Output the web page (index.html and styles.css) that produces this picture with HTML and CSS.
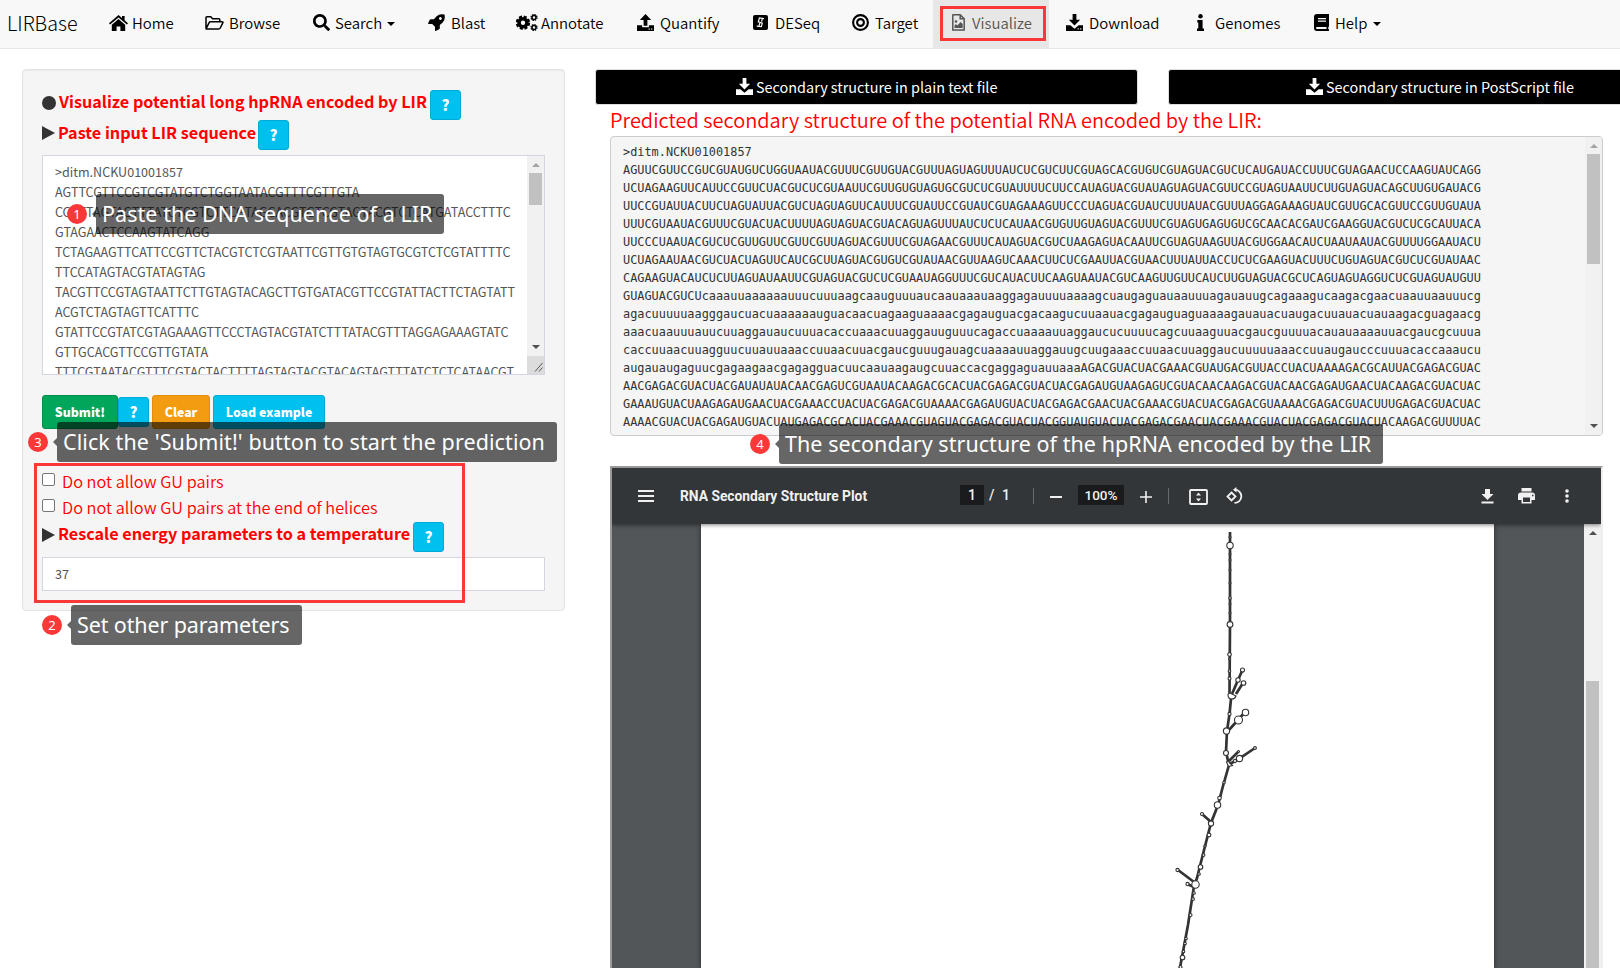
FILE: index.html
```html
<!DOCTYPE html>
<html lang="en">
<head>
<meta charset="utf-8">
<title>LIRBase</title>
<link rel="stylesheet" href="styles.css">
</head>
<body>
<svg class="defs" width="0" height="0">
  <symbol id="download" viewBox="0 0 18 18"><path d="M7 0h4v6h4l-6 6.3L3 6h4zM0 12h4.6L9 15.6 13.4 12H18v6H0z"/><path class="dot" d="M12.3 15.2h1.2v1.2h-1.2zM15 15.2h1.2v1.2H15z"/></symbol>
</svg>
<nav class="navbar">
  <a class="brand">LIRBase</a>
  <a class="item home"><svg width="19" height="16" viewBox="0 0 19 16"><path d="M9.5 0 13 3V1h2.6v4.2L19 8.2l-1.1 1.3-8.4-7.1-8.4 7.1L0 8.2z"/><path d="m9.5 4.1 6.7 5.7V16h-4.8v-4.6H7.6V16H2.8V9.8z"/></svg><span>Home</span></a>
  <a class="item browse"><svg width="19" height="14" viewBox="0 0 19 14"><path class="line" d="M1 12V1.8Q1 .8 2 .8h3.8l1.8 2h6.2q1 0 1 1v2M1 12.8l3-6q.5-1 1.5-1h11.4q1.5 0 .9 1.1l-2.4 4.8q-.6 1.3-2 1.3H1.6Q.8 13 1 12z"/></svg><span>Browse</span></a>
  <a class="item search"><svg width="17" height="17" viewBox="0 0 512 512"><path d="M505 442.7L405.3 343c-4.5-4.5-10.6-7-17-7H372c27.6-35.3 44-79.7 44-128C416 93.1 322.9 0 208 0S0 93.1 0 208s93.1 208 208 208c48.3 0 92.7-16.4 128-44v16.3c0 6.4 2.5 12.5 7 17l99.7 99.7c9.4 9.4 24.6 9.4 33.9 0l28.3-28.3c9.4-9.4 9.4-24.6.1-34zM208 336c-70.7 0-128-57.2-128-128s57.2-128 128-128 128 57.2 128 128-57.2 128-128 128z"/></svg><span>Search</span><i class="caret"></i></a>
  <a class="item blast"><svg width="17" height="17" viewBox="0 0 17 17"><path fill-rule="evenodd" d="M16.5.5q1.2 5.2-2 8.2l-2.7 2.4v3.2q0 .6-.6.9L7.7 17q-.7 0-.7-.8v-3.4L4.2 10H.8q-.8 0-.8-.7l1.8-3.5q.3-.6.9-.6h3.2l2.5-2.7Q11.300-.7 16.500.5zM12.400 3.100a1.400 1.400 0 1 0 .01 0z"/></svg><span>Blast</span></a>
  <a class="item annotate"><svg width="22" height="17" viewBox="0 0 22 17"><circle class="gear" cx="7" cy="8.700" r="4"/><circle class="teeth" cx="7" cy="8.700" r="6"/><circle class="mini" cx="18" cy="3.500" r="2"/><circle class="miniteeth" cx="18" cy="3.500" r="3"/><circle class="mini" cx="18" cy="13.500" r="2"/><circle class="miniteeth" cx="18" cy="13.500" r="3"/></svg><span>Annotate</span></a>
  <a class="item quantify"><svg width="17" height="17" viewBox="0 0 18 18"><path d="M7 12.500h4V6.300h4L9 0 3 6.300h4zM0 12h5.400v2h7.200v-2H18v6H0z"/><path class="dot" d="M12.300 15.400h1.200v1.200h-1.200zM15 15.400h1.200v1.200H15z"/></svg><span>Quantify</span></a>
  <a class="item deseq"><svg width="15" height="15" viewBox="0 0 15 15"><rect width="15" height="15" rx="2"/><path class="cut" d="M11 3.700 6.400 3 5.300 6.900l4 1.200-1 3.600-4.600-.6M9.300 4l-.8 2.700M6.800 8.200 6 11"/></svg><span>DESeq</span></a>
  <a class="item target"><svg width="17" height="17" viewBox="0 0 17 17"><circle class="ring" cx="8.500" cy="8.500" r="7.400"/><circle class="ring" cx="8.500" cy="8.500" r="3.400"/></svg><span>Target</span></a>
  <a class="item visualize active"><svg width="13" height="17" viewBox="0 0 13 17"><path class="line" d="M.8 1q0-.2.400-.2h7l4 4v11.200H.8zM8.200.8v4h4"/><circle cx="4" cy="7.500" r="1.300"/><path d="M2.500 14v-2.500L4 10l1.300 1.500L8.700 8l2 2v4z"/></svg><span>Visualize</span></a>
  <a class="item dl"><svg width="17" height="17"><use href="#download"/></svg><span>Download</span></a>
  <a class="item genomes"><svg width="7" height="17" viewBox="0 0 7 17"><circle cx="3.500" cy="2.200" r="2.200"/><path d="M.3 6h5.300v8.500H7V17H0v-2.500h1.300v-6h-1z"/></svg><span>Genomes</span></a>
  <a class="item help"><svg width="15" height="17" viewBox="0 0 15 17"><path fill-rule="evenodd" d="M3 0h12v12.500l-.7.600v1.800l.7.600V17H3q-3 0-3-3V3q0-3 3-3zm1 4v1.200h8V4zm0 2.600v1.200h8V6.600zM3 12.900q-1 0-1 1t1 1h9.500v-2z"/></svg><span>Help</span><i class="caret"></i></a>
</nav>

<main class="columns">
  <form class="well">
    <div class="heading first"><i class="disc"></i><b>Visualize potential long hpRNA encoded by LIR</b><i class="q">?</i></div>
    <div class="heading second"><i class="play"></i><b>Paste input LIR sequence</b><i class="q">?</i></div>
    <div class="textarea">
      <div class="dna">&gt;ditm.NCKU01001857<br>AGTTCGTTCCGTCGTATGTCTGGTAATACGTTTCGTTGTA<br>CGTTTAGTAGTTTATCTCGTCTTCGTAGCACGTGTCGTAGTACGTCTCATGATACCTTTC<br>GTAGAACTCCAAGTATCAGG<br>TCTAGAAGTTCATTCCGTTCTACGTCTCGTAATTCGTTGTGTAGTGCGTCTCGTATTTTC<br>TTCCATAGTACGTATAGTAG<br>TACGTTCCGTAGTAATTCTTGTAGTACAGCTTGTGATACGTTCCGTATTACTTCTAGTATT<br>ACGTCTAGTAGTTCATTTC<br>GTATTCCGTATCGTAGAAAGTTCCCTAGTACGTATCTTTATACGTTTAGGAGAAAGTATC<br>GTTGCACGTTCCGTTGTATA<br>TTTCGTAATACGTTTCGTACTACTTTTAGTAGTACGTACAGTAGTTTATCTCTCATAACGT</div>
      <div class="scroll"><i class="up"></i><i class="thumb"></i><i class="down"></i><svg class="grip" width="18" height="18" viewBox="0 0 18 18"><path d="M8 15.500 15.500 7M12 15.500l3.500-4"/></svg></div>
    </div>
    <div class="buttons"><span class="btn green">Submit!</span><i class="q">?</i><span class="btn orange">Clear</span><span class="btn cyan">Load example</span></div>
    <label class="check"><i class="box"></i><span class="gu1">Do not allow GU pairs</span></label>
    <label class="check"><i class="box"></i><span class="gu2">Do not allow GU pairs at the end of helices</span></label>
    <div class="heading third"><i class="play"></i><b>Rescale energy parameters to a temperature</b><i class="q">?</i></div>
    <div class="input">37</div>
  </form>

  <section class="results">
    <div class="files">
      <a class="file plain"><svg width="17" height="17"><use href="#download"/></svg><span>Secondary structure in plain text file</span></a>
      <a class="file post"><svg width="17" height="17"><use href="#download"/></svg><span>Secondary structure in PostScript file</span></a>
    </div>
    <h2>Predicted secondary structure of the potential RNA encoded by the LIR:</h2>
    <div class="output">
<pre>&gt;ditm.NCKU01001857
AGUUCGUUCCGUCGUAUGUCUGGUAAUACGUUUCGUUGUACGUUUAGUAGUUUAUCUCGUCUUCGUAGCACGUGUCGUAGUACGUCUCAUGAUACCUUUCGUAGAACUCCAAGUAUCAGG
UCUAGAAGUUCAUUCCGUUCUACGUCUCGUAAUUCGUUGUGUAGUGCGUCUCGUAUUUUCUUCCAUAGUACGUAUAGUAGUACGUUCCGUAGUAAUUCUUGUAGUACAGCUUGUGAUACG
UUCCGUAUUACUUCUAGUAUUACGUCUAGUAGUUCAUUUCGUAUUCCGUAUCGUAGAAAGUUCCCUAGUACGUAUCUUUAUACGUUUAGGAGAAAGUAUCGUUGCACGUUCCGUUGUAUA
UUUCGUAAUACGUUUCGUACUACUUUUAGUAGUACGUACAGUAGUUUAUCUCUCAUAACGUGUUGUAGUACGUUUCGUAGUGAGUGUCGCAACACGAUCGAAGGUACGUCUCGCAUUACA
UUCCCUAAUACGUCUCGUUGUUCGUUCGUUAGUACGUUUCGUAGAACGUUUCAUAGUACGUCUAAGAGUACAAUUCGUAGUAAGUUACGUGGAACAUCUAAUAAUACGUUUUGGAAUACU
UCUAGAAUAACGUCUACUAGUUCAUCGCUUAGUACGUGUCGUAUAACGUUAAGUCAAACUUCUCGAAUUACGUAACUUUAUUACCUCUCGAAGUACUUUCUGUAGUACGUCUCGUAUAAC
CAGAAGUACAUCUCUUAGUAUAAUUCGUAGUACGUCUCGUAAUAGGUUUCGUCAUACUUCAAGUAAUACGUCAAGUUGUUCAUCUUGUAGUACGCUCAGUAGUAGGUCUCGUAGUAUGUU
GUAGUACGUCUcaaauuaaaaaauuucuuuaagcaauguuuaucaauaaauaaggagauuuuaaaagcuaugaguauaauuuagauauugcagaaagucaagacgaacuaauuaauuucg
agacuuuuuaagggaucuacuaaaaaauguacaacuagaaguaaaacgagauguacgacaagucuuaauacgagauguaguaaaagauauacuaugacuuauacuauaagacguagaacg
aaacuaauuuauucuuaggauaucuuuacaccuaaacuuaggauuguuucagaccuaaaauuaggaucucuuuucagcuuaaguuacgaucguuuuacauauaaaauuacgaucgcuuua
caccuuaacuuagguucuuauuaaaccuuaacuuacgaucguuugauagcuaaaauuaggauugcuugaaaccuuaacuuaggaucuuuuuaaaccuuaugaucccuuuacaccaaaucu
augauaugaguucgagaagaacgagagguacuucaauaagaugcuuaccacgaggaguauuaaaAGACGUACUACGAAACGUAUGACGUUACCUACUAAAAGACGCAUUACGAGACGUAC
AACGAGACGUACUACGAUAUAUACAACGAGUCGUAAUACAAGACGCACUACGAGACGUACUACGAGAUGUAAGAGUCGUACAACAAGACGUACAACGAGAUGAACUACAAGACGUACUAC
GAAAUGUACUAAGAGAUGAACUACGAAACCUACUACGAGACGUAAAACGAGAUGUACUACGAGACGAACUACGAAACGUACUACGAGACGUAAAACGAGACGUACUUUGAGACGUACUAC
AAAACGUACUACGAGAUGUACUAUGAGACGCACUACGAAACGUAGUACGAGACGUACUACGGUAUGUACUACGAGACGAACUACGAAACGUACUACGAGACGUACUACAAGACGUUUUAC</pre>
      <div class="scroll"><i class="up"></i><i class="thumb"></i><i class="down"></i></div>
    </div>
    <div class="viewer">
      <header class="toolbar">
        <svg class="menu" width="16" height="12"><path d="M0 0h16v2H0zM0 5h16v2H0zM0 10h16v2H0z"/></svg>
        <b>RNA Secondary Structure Plot</b>
        <span class="page">1</span><span class="slash">/</span><span class="total">1</span>
        <i class="divider"></i>
        <svg class="minus" width="12" height="12"><path d="M0 6h12v2H0z"/></svg>
        <span class="zoom">100%</span>
        <svg class="plus" width="12" height="12"><path d="M0 5.200h12v1.600H0zM5.200 0h1.600v12H5.200z"/></svg>
        <i class="divider two"></i>
        <svg class="fit" width="19" height="16" viewBox="0 0 19 16"><rect class="stroke" x="1" y="1" width="17" height="14" rx="1"/><path d="M7 6.400h5L9.500 3.600zM7 9.600h5l-2.500 2.800z"/></svg>
        <svg class="rotate" width="18" height="18" viewBox="0 0 18 18"><path class="stroke" d="m5.500 5.500 4 4-4 4-4-4zM9 2.700a6.600 6.600 0 1 1-.5 13.200"/><path d="M10.500 0v5.600L7 2.800z"/></svg>
        <svg class="save" width="13" height="16"><path d="M4 1h5v5h3.500l-6 6-6-6H4zM.5 13.500h12v2H.5z"/></svg>
        <svg class="print" width="17" height="16" viewBox="0 0 17 16"><path fill-rule="evenodd" d="M3.500 0h10v3.500h-10zM3 4.500h11q3 0 3 3V12h-3.500v3.500h-10V12H0V7.500q0-3 3-3zm2 5V14h7V9.500zM14 6.800v1.400h1.500V6.800z"/></svg>
        <svg class="more" width="4" height="14"><circle cx="2" cy="2" r="1.800"/><circle cx="2" cy="7" r="1.800"/><circle cx="2" cy="12" r="1.800"/></svg>
      </header>
      <div class="document">
        <div class="paper">
          <svg class="plot" width="793" height="444" viewBox="701 524 793 444">
            <g class="stem">
              <path d="M1230 532V624L1229.500 693 1231 699 1229.500 714 1227 731 1226 752 1229 765 1223 786 1218 805 1211 823 1203 854 1197 878 1194 886 1188 925 1182 957 1179.500 970"/>
              <path d="M1232 694 1238 680 1242.500 670M1236 694 1243 683M1228 731 1238 720 1245 712M1229 761 1238 752M1230 764 1240 758 1255 748M1211 822 1202 814M1194 882 1178 870M1194 887 1187 884"/>
            </g>
            <g class="loops">
              <circle cx="1230" cy="545.500" r="3.200"/><circle cx="1230" cy="624.500" r="2.900"/><circle cx="1230" cy="537" r="1"/><circle cx="1230" cy="554" r="1"/><circle cx="1230" cy="560" r="1"/><circle cx="1230" cy="570" r="1"/><circle cx="1230" cy="583" r="1"/><circle cx="1230" cy="598" r="1.300"/><circle cx="1230" cy="604" r="1"/><circle cx="1230" cy="613" r="1"/><circle cx="1229.500" cy="654.500" r="1.800"/><circle cx="1229.500" cy="659" r="1"/><circle cx="1229.500" cy="671" r="1.300"/><circle cx="1229.500" cy="678.500" r="1.500"/>
              <path d="M1228 695q0-2 2-2l6 3q-1 3-4 3-4 0-4-4z"/><circle cx="1242.500" cy="670" r="2"/><circle cx="1238" cy="680" r="2.200"/><circle cx="1243.500" cy="683" r="2.300"/>
              <circle cx="1229.500" cy="714" r="1.600"/><circle cx="1238.500" cy="720" r="4"/><circle cx="1245.500" cy="712.500" r="3.200"/><circle cx="1226.500" cy="731" r="3.100"/><circle cx="1226" cy="753" r="2.500"/><path d="M1226.500 762q2-2 3 1l3 2.500-4 1z"/><circle cx="1239.500" cy="758.500" r="3.100"/><circle cx="1235" cy="761" r="1.600"/><circle cx="1238.500" cy="751.500" r="1"/><circle cx="1255" cy="748" r="1.400"/>
              <circle cx="1224" cy="782.500" r="1.200"/><circle cx="1219.500" cy="798" r="1.800"/><circle cx="1217.500" cy="805" r="3.200"/><circle cx="1211" cy="823.500" r="2.600"/><circle cx="1202" cy="814" r="1.500"/><circle cx="1209" cy="835" r="1.900"/><circle cx="1205" cy="846" r="1.100"/><circle cx="1203.500" cy="855" r="1.400"/><circle cx="1200.500" cy="867" r="2.300"/><circle cx="1199" cy="874" r="1.300"/><circle cx="1195.500" cy="884.500" r="3.700"/><circle cx="1187.500" cy="884" r="1.600"/><circle cx="1177.500" cy="870" r="1.600"/><circle cx="1194" cy="893" r="1.300"/><circle cx="1193" cy="899" r="1.400"/><circle cx="1190.500" cy="915" r="1.500"/><circle cx="1186" cy="938.500" r="1.300"/><circle cx="1185" cy="943.500" r="1.300"/><circle cx="1183.500" cy="951.500" r="1.300"/><circle cx="1182.500" cy="957.500" r="2.300"/><circle cx="1180.500" cy="967" r="1.500"/>
            </g>
          </svg>
        </div>
        <div class="scroll"><i class="up"></i><i class="thumb"></i></div>
      </div>
    </div>
  </section>
</main>

<div class="mark nav-mark"></div>
<div class="mark param-mark"></div>
<div class="note n1"><i>1</i><p>Paste the DNA sequence of a LIR</p></div>
<div class="note n3"><i>3</i><p>Click the 'Submit!' button to start the prediction</p></div>
<div class="note n2"><i>2</i><p>Set other parameters</p></div>
<div class="note n4"><i>4</i><p>The secondary structure of the hpRNA encoded by the LIR</p></div>
</body>
</html>
```

FILE: styles.css
```css
* { box-sizing: border-box; }
body { margin: 0; width: 1620px; height: 968px; overflow: hidden; position: relative; background: #fff; color: #333; font-family: "Noto Sans CJK SC", "Noto Sans", sans-serif; font-size: 14px; }
i { font-style: normal; display: block; flex: none; }
svg { display: block; flex: none; fill: currentColor; }
.defs { position: absolute; }
span, b { white-space: nowrap; }

.navbar { height: 49px; display: flex; background: #f8f8f8; border-bottom: 1px solid #e7e7e7; color: #000; line-height: 46px; font-size: 14.950px; font-weight: 350; }
.brand { width: 94px; padding-left: 7px; font-size: 19.700px; font-weight: 300; color: #000; }
.item { display: flex; align-items: center; height: 48px; padding-left: 15px; gap: 5px; flex: none; }
.item svg { margin-top: -3px; }
.item span { height: 48px; }
.home { width: 96px; gap: 4px; }
.browse { width: 107px; }
.search { width: 116px; padding-left: 16px; gap: 5px; }
.blast { width: 87px; gap: 6px; }
.annotate { width: 122px; padding-left: 16px; gap: 3px; }
.quantify { width: 115px; gap: 6px; }
.deseq { width: 100px; padding-left: 16px; gap: 7px; }
.target { width: 96px; gap: 6px; }
.visualize { width: 116px; padding-left: 19px; gap: 7px; }
.dl { width: 130px; padding-left: 17px; gap: 6px; }
.genomes { width: 118px; padding-left: 18px; gap: 11px; }
.help { gap: 6px; padding-left: 17px; }
.active { background: #e7e7e7; color: #555; }
.caret { border: 4px solid transparent; border-top-color: #000; border-bottom: 0; margin-top: 0; }
.line { fill: none; stroke: currentColor; stroke-width: 1.500; }
.gear { fill: none; stroke: #000; stroke-width: 3.600; }
.teeth { fill: none; stroke: #000; stroke-width: 2.400; stroke-dasharray: 3 1.710; }
.mini { fill: none; stroke: #000; stroke-width: 1.500; }
.miniteeth { fill: none; stroke: #000; stroke-width: 1.200; stroke-dasharray: 1.400 .956; }
.ring { fill: none; stroke: #000; stroke-width: 2.100; }
.cut { fill: none; stroke: #f8f8f8; stroke-width: 1.200; }
.dot { fill: #f8f8f8; }

.columns { display: flex; align-items: flex-start; padding: 20px 0 0 22px; }
.well { width: 543px; height: 542px; flex: none; background: #f5f5f5; border: 1px solid #e3e3e3; border-radius: 4px; box-shadow: inset 0 1px 1px rgba(0,0,0,.05); padding: 20px 19px; }
.heading { display: flex; align-items: center; height: 30px; color: #333; }
.heading b { color: #f00; font-size: 16.180px; line-height: 24px; margin-top: -9px; }
.disc { width: 14px; height: 14px; border-radius: 50%; background: #333; margin: -5px 3px 0 0; }
.play { border: 7px solid transparent; border-left: 13px solid #333; border-right: 0; margin: -4px 3px 0 0; }
.third .play { margin-top: -5px; }
.second b { margin-top: -6px; }
.q { width: 31px; height: 30px; background: #00c0ef; border: 1px solid #00acd6; border-radius: 3px; color: #fff; font-weight: 900; font-size: 15px; line-height: 27px; text-align: center; }
.first .q, .second .q, .third .q { margin-left: auto; }
.first { width: 419px; }
.second { width: 247px; }
.third { width: 402px; margin-top: 1px; }
.textarea { margin-top: 5px; width: 503px; height: 220px; display: flex; background: #fff; border: 1px solid #d2d6de; overflow: hidden; }
.dna { padding: 6px 0 0 12px; width: 484px; flex: none; color: #555; font-size: 12.570px; line-height: 20px; white-space: nowrap; }
.scroll { width: 17px; flex: none; background: #f1f1f1; display: flex; flex-direction: column; align-items: center; height: 100%; }
.up { border: 4px solid transparent; border-top: 0; border-bottom-color: #a3a3a3; margin-top: 7px; }
.down { border: 4px solid transparent; border-bottom: 0; border-top-color: #505050; margin-top: auto; }
.thumb { width: 13px; background: #c1c1c1; margin-top: 6px; }
.textarea .thumb { height: 32px; }
.grip { background: #dcdcdc; fill: none; stroke: #555; margin-top: 7px; }
.buttons { display: flex; margin-top: 20px; height: 34px; }
.btn { height: 34px; border: 1px solid; border-radius: 3px; color: #fff; text-align: center; line-height: 32px; font-weight: 900; font-size: 12.300px; }
.green { width: 76px; background: #00a65a; border-color: #008d4c; }
.orange { width: 58px; margin: 0 3px; background: #f39c12; border-color: #e08e0b; }
.cyan { width: 112px; background: #00c0ef; border-color: #00acd6; }
.buttons .q { margin-top: 2px; }
.check { display: flex; height: 26px; color: #f00; font-size: 16.320px; font-weight: 350; line-height: 25px; }
.buttons + .check { margin-top: 40px; }
.box { width: 13px; height: 13px; margin: 4px 7px 0 0; border: 1px solid #767676; border-radius: 2px; background: #fff; }
.input { margin-top: 5px; width: 503px; height: 34px; background: #fff; border: 1px solid #d2d6de; padding-left: 12px; color: #555; font-size: 12.700px; line-height: 31px; }

.results { width: 1025px; flex: none; margin-left: 30px; }
.files { display: flex; gap: 30px; }
.file { width: 543px; height: 36px; flex: none; background: #000; border: 1px solid #ddd; border-radius: 3px; color: #fff; display: flex; align-items: center; font-size: 14.420px; line-height: 30px; gap: 3px; }
.file svg { margin-top: -2px; }
.plain { padding-left: 140px; }
.post { padding-left: 137px; }
h2 { margin: 0 0 0 15px; height: 31px; color: #f00; font-weight: 350; font-size: 20px; line-height: 29px; white-space: nowrap; }
.output { margin-left: 15px; width: 993px; height: 300px; border: 1px solid #ccc; border-radius: 4px; background: #f5f5f5; display: flex; overflow: hidden; }
pre { margin: 0; padding: 6px 0 0 12px; width: 974px; flex: none; color: #333; font: 11.880px/18px "DejaVu Sans Mono", monospace; }
.output .thumb { height: 110px; }
.output .down { margin-bottom: 7px; }
.viewer { margin: 30px 0 0 15px; width: 993px; height: 502px; border: 2px solid #9a9a9a; border-right-color: #eee; border-bottom: 0; background: #525659; overflow: hidden; }
.toolbar { height: 56px; position: relative; z-index: 1; display: flex; align-items: center; background: #323639; color: #f1f1f1; box-shadow: 0 1px 4px rgba(0,0,0,.5); font: 500 14px/20px Roboto, sans-serif; padding-left: 26px; }
.toolbar b { font-weight: 700; font-size: 13.800px; width: 280px; margin-left: 26px; }
.page, .zoom { background: #191b1c; height: 20px; text-align: center; margin-top: -2px; }
.page { width: 24px; }
.slash { margin: -3px 0 0 5px; width: 10px; }
.total { margin: -3px 0 0 3px; width: 31px; }
.divider { width: 1px; height: 16px; background: #686b6e; }
.minus { margin: 0 16px; }
.zoom { width: 46px; font-size: 13.500px; }
.plus { margin: 2px 16px 0; }
.fit { margin: 2px 18px 0 20px; }
.rotate { margin-right: 237px; }
.print { margin: 0 30px 0 24px; }
.stroke { fill: none; stroke: currentColor; stroke-width: 1.800; }
.document { display: flex; height: 444px; }
.paper { width: 793px; background: #fff; margin: 0 90px 0 89px; flex: none; box-shadow: 0 0 5px rgba(0,0,0,.5); }
.document .scroll { width: 17px; }
.document .thumb { height: 287px; margin-top: 146px; }
.document .up { border-bottom-color: #505050; margin-top: 7px; }
.stem { fill: none; stroke: #333; stroke-width: 2.700; }
.loops { fill: #fff; stroke: #333; stroke-width: 1.100; }

.mark { position: absolute; border: 3px solid #fb3838; }
.nav-mark { left: 940px; top: 6px; width: 106px; height: 35px; }
.param-mark { left: 34px; top: 463px; width: 431px; height: 140px; }
.note { position: absolute; display: flex; align-items: center; height: 40px; color: #fff; font-family: "Noto Sans", sans-serif; }
.note i { width: 20px; height: 20px; border-radius: 50%; background: #fb3838; text-align: center; font-size: 13px; line-height: 20px; }
.note p { margin: 0 0 0 9px; height: 40px; padding-left: 6px; border-radius: 3px; background: rgba(0,0,0,.6); font-size: 21.500px; line-height: 39px; white-space: nowrap; position: relative; }
.note p::before { content: ""; position: absolute; left: -4px; top: 16px; border: 4px solid transparent; border-left: 0; border-right-color: rgba(0,0,0,.6); }
.n1 { left: 67px; top: 194px; }
.n1 p { width: 348px; letter-spacing: .050px; }
.n2 { left: 42px; top: 605px; }
.n2 p { width: 231px; letter-spacing: -.130px; }
.n3 { left: 28px; top: 422px; }
.n3 p { width: 500px; letter-spacing: .090px; }
.n4 { left: 750px; top: 424px; }
.n4 p { width: 604px; letter-spacing: .045px; }
```
